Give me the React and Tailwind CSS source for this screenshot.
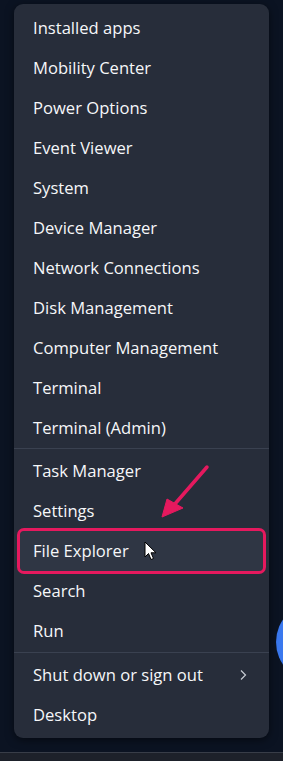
import React from "react";

const group1 = [
  "Installed apps",
  "Mobility Center",
  "Power Options",
  "Event Viewer",
  "System",
  "Device Manager",
  "Network Connections",
  "Disk Management",
  "Computer Management",
  "Terminal",
  "Terminal (Admin)",
];
const group2 = ["Task Manager", "Settings", "File Explorer", "Search", "Run"];

function Item({ label, children }) {
  return (
    <div className="h-[40px] flex items-center pl-[19px] pr-[22px] text-[16.6px] text-[#f6f7f9]">
      <span className="flex-1">{label}</span>
      {children}
    </div>
  );
}

export default function App() {
  return (
    <div
      className="relative w-[283px] h-[761px] overflow-hidden bg-[#0b1322] flex flex-col"
      style={{ fontFamily: '"Open Sans", "Noto Sans", sans-serif' }}
    >
      <div className="absolute left-[276px] top-[602px] w-[80px] h-[80px] rounded-full bg-[#3a78ee]" />
      <div className="flex-1 pt-[4px] pl-[14px] pr-[14px]">
        <div className="relative w-[255px] rounded-[9px] bg-[#272d3a] pt-[4px] pb-[3px] shadow-[0_2px_8px_rgba(0,0,0,0.5)]">
          {group1.map((l) => (
            <Item key={l} label={l} />
          ))}
          <div className="h-px bg-[#3a4150]" />
          <div className="pt-[2px]">
            {group2.map((l) =>
              l === "File Explorer" ? (
                <div
                  key={l}
                  className="relative mx-[6px] h-[40px] flex items-center pl-[13px] text-[16.6px] text-[#f6f7f9] rounded-[4px] bg-[#2f3644] outline outline-[3px] outline-[#e5195e]"
                >
                  {l}
                  <svg className="absolute left-[124px] top-[10px]" width="14" height="21" viewBox="0 0 14 21">
                    <path d="M1 1 L1 16 L4.5 12.5 L7 18.5 L9.5 17.5 L7 11.8 L12 11.8 Z" fill="#ffffff" stroke="#000000" strokeWidth="1" strokeLinejoin="round" />
                  </svg>
                </div>
              ) : (
                <Item key={l} label={l} />
              )
            )}
          </div>
          <div className="h-px bg-[#3a4150] mt-px" />
          <div className="pt-[2px]">
            <Item label="Shut down or sign out">
              <svg width="8" height="12" viewBox="0 0 8 12">
                <path d="M2 1.5 L6.5 6 L2 10.5" fill="none" stroke="#c8ccd4" strokeWidth="1.2" />
              </svg>
            </Item>
            <Item label="Desktop" />
          </div>
          <svg className="absolute left-[136px] top-[454px]" width="66" height="66" viewBox="0 0 66 66">
            <line x1="57" y1="9" x2="24" y2="47" stroke="#e5195e" strokeWidth="3.5" strokeLinecap="round" />
            <path d="M12 59 L17 41 L33 50 Z" fill="#e5195e" stroke="#e5195e" strokeWidth="1" strokeLinejoin="round" />
          </svg>
        </div>
      </div>
      <div className="h-[9px] bg-[#1d212a] border-t border-[#383d48]" />
    </div>
  );
}
